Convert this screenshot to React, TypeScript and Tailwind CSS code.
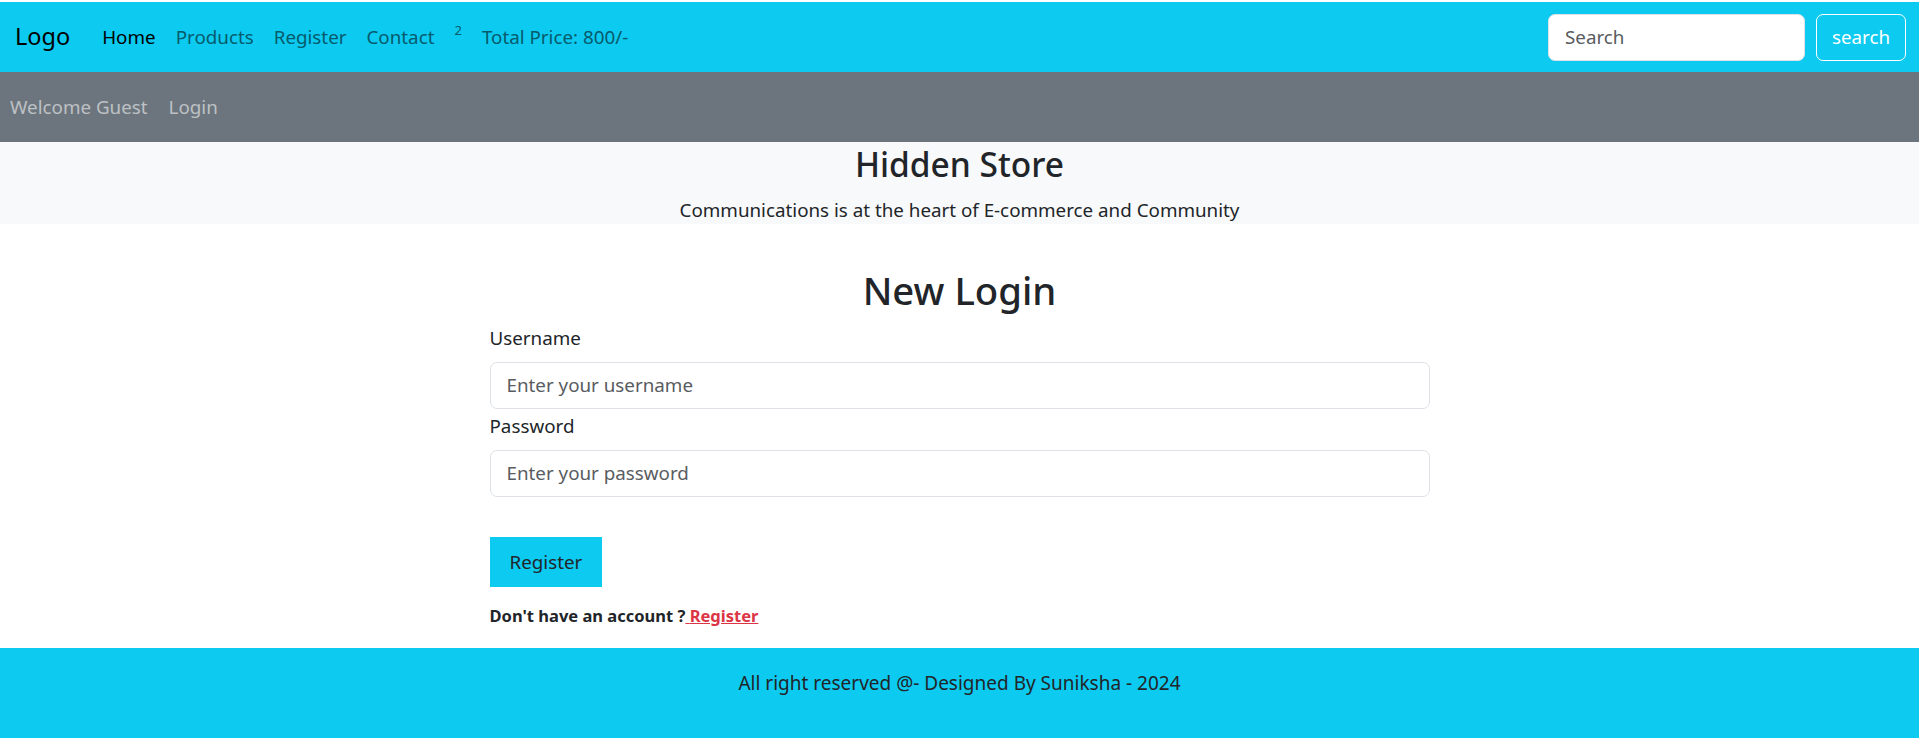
import React, { useState } from "react";

const font = { fontFamily: '"Noto Sans", "Open Sans", sans-serif' };

const Navbar = () => {
  const [query, setQuery] = useState("");
  return (
    <nav className="h-[70px] bg-[#0dcaf0] flex items-center pl-[15px] pr-[13px]">
      <a href="#" className="text-[23.5px] text-black mr-[22px] leading-none">
        Logo
      </a>
      <ul className="flex items-center text-[18.8px] text-[#065b6c]">
        <li className="px-[10px] text-black">Home</li>
        <li className="px-[10px]">Products</li>
        <li className="px-[10px]">Register</li>
        <li className="px-[10px]">Contact</li>
        <li className="px-[10px] text-[13px] -translate-y-[6px]">2</li>
        <li className="px-[10px]">Total Price: 800/-</li>
      </ul>
      <form className="ml-auto flex items-center gap-[11px]" onSubmit={(e) => e.preventDefault()}>
        <input
          type="search"
          value={query}
          onChange={(e) => setQuery(e.target.value)}
          placeholder="Search"
          className="w-[257px] h-[47px] bg-white rounded-[7px] border border-[#dee2e6] px-[16px] text-[18.8px] text-[#212529] placeholder:text-[#595c5f] outline-none"
        />
        <button className="w-[90px] h-[47px] rounded-[7px] border border-white text-white text-[18.8px]">
          search
        </button>
      </form>
    </nav>
  );
};

const App = () => {
  const [form, setForm] = useState({ username: "", password: "" });
  const handleChange = (e: React.ChangeEvent<HTMLInputElement>) =>
    setForm((prev) => ({ ...prev, [e.target.name]: e.target.value }));

  return (
    <div className="bg-white pt-[2px] pb-[2px] text-[#212529]" style={font}>
      <Navbar />
      <div className="h-[70px] bg-[#6c757d] flex items-center px-[10px] gap-[21px] text-[18.8px] text-[#bdc1c5]">
        <span>Welcome Guest</span>
        <span>Login</span>
      </div>
      <div className="h-[82px] bg-[#f8f9fa] flex flex-col items-center">
        <h3 className="text-[33.5px] font-medium leading-[1.2] mt-[2px]">Hidden Store</h3>
        <p className="text-[18.8px] leading-[1.5] mt-[12px]">
          Communications is at the heart of E-commerce and Community
        </p>
      </div>
      <main className="w-[940px] mx-auto pt-[44px] pb-[18px]">
        <h2 className="text-[38.3px] font-medium leading-[1.2] text-center">New Login</h2>
        <form onSubmit={(e) => e.preventDefault()}>
          <label htmlFor="username" className="block text-[18.8px] leading-[30px] mt-[9px]">
            Username
          </label>
          <input
            id="username"
            name="username"
            value={form.username}
            onChange={handleChange}
            placeholder="Enter your username"
            className="block w-full h-[47px] mt-[9px] rounded-[7px] border border-[#dee2e6] px-[16px] text-[18.8px] placeholder:text-[#595c5f] outline-none"
          />
          <label htmlFor="password" className="block text-[18.8px] leading-[30px] mt-[2px]">
            Password
          </label>
          <input
            id="password"
            name="password"
            type="password"
            value={form.password}
            onChange={handleChange}
            placeholder="Enter your password"
            className="block w-full h-[47px] mt-[9px] rounded-[7px] border border-[#dee2e6] px-[16px] text-[18.8px] placeholder:text-[#595c5f] outline-none"
          />
          <button className="mt-[40px] h-[50px] px-[20px] bg-[#0dcaf0] text-[18.8px] text-[#212529]">
            Register
          </button>
          <p className="mt-[15px] text-[16.5px] font-bold leading-[28px]">
            Don't have an account ?
            <a href="#" className="text-[#dc3545] underline">
              {" "}Register
            </a>
          </p>
        </form>
      </main>
      <footer className="h-[90px] bg-[#0dcaf0] flex justify-center pt-[20px]">
        <p className="text-[19px] leading-[30px]">All right reserved @- Designed By Suniksha - 2024</p>
      </footer>
    </div>
  );
};

export default App;
